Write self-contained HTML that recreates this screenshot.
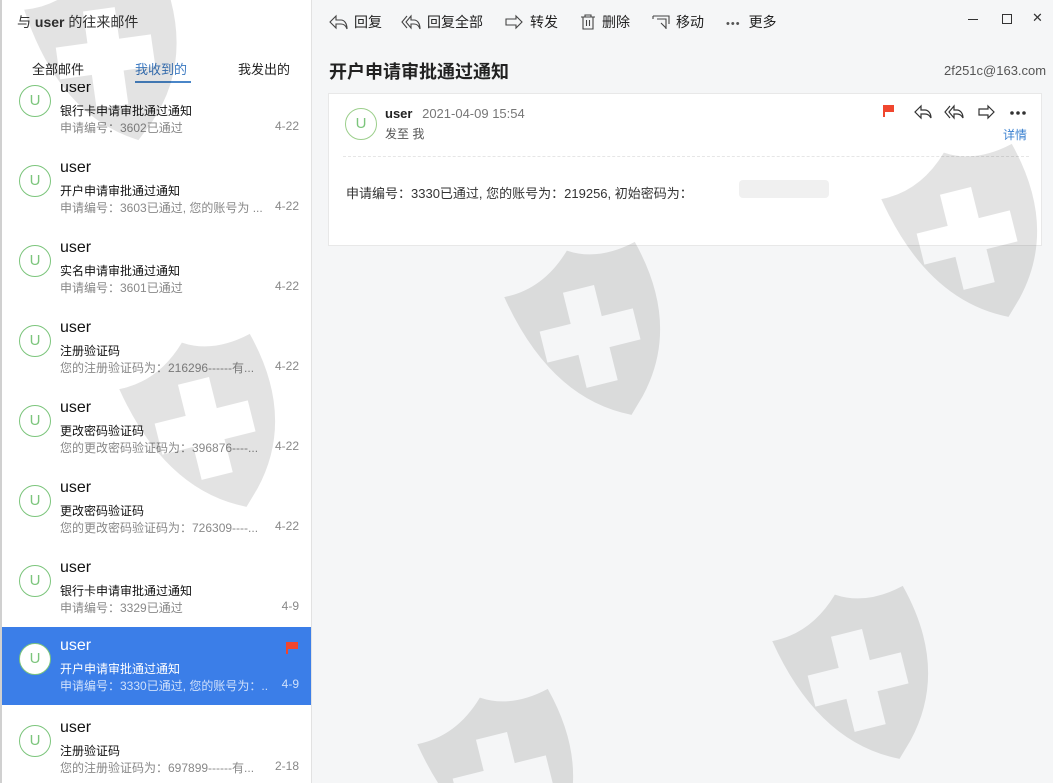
<!DOCTYPE html>
<html><head><meta charset="utf-8"><style>
*{margin:0;padding:0;box-sizing:border-box}
body{width:1053px;height:783px;overflow:hidden;position:relative;background:#f5f6f7;font-family:"Liberation Sans","Noto Sans CJK SC",sans-serif;color:#222}
#left{position:absolute;left:0;top:0;width:312px;height:783px;background:#fff;border-left:2px solid #d0d0d0;border-right:1px solid #e2e2e2;overflow:hidden}
.hdr{position:absolute;left:15px;top:12px;font-size:14px;color:#333}
.tabs{position:absolute;top:59px;left:0;width:310px;font-size:13px;color:#222}
.tabs span{position:absolute}
.list{position:absolute;top:84px;left:0;width:310px;height:699px;overflow:hidden}
.it{position:absolute;left:0;width:310px;height:78px}
.av{position:absolute;left:17px;top:16px;width:32px;height:32px;border:1px solid #7cc57c;border-radius:50%;text-align:center;line-height:30px;color:#7cc57c;font-size:15px;background:#fff}
.u{position:absolute;left:58px;top:10px;font-size:16px;color:#111}
.t{position:absolute;left:58px;top:33px;font-size:12px;color:#111}
.p{position:absolute;left:58px;top:50px;font-size:12px;color:#888;width:207px;white-space:nowrap;overflow:hidden}
.d{position:absolute;right:13px;top:50px;font-size:12px;color:#888}
.sel{background:#3b7ee8}
.sel .u,.sel .t{color:#fff}.sel .p,.sel .d{color:#cfe0fb}
.tb{position:absolute;top:12px;font-size:14px;color:#222}
.tb svg{vertical-align:-3px;margin-right:6px}
</style></head><body>
<div id="left">
<div class="hdr">与 <b>user</b> 的往来邮件</div>
<div class="tabs"><span style="left:30px">全部邮件</span><span style="left:133px;color:#3a78c0">我收到的</span><span style="left:133px;top:22px;width:56px;height:2px;background:#4a86c8"></span><span style="left:236px">我发出的</span></div>
<div class="list">
<div class="it" style="top:-15px"><div class="av">U</div><div class="u">user</div><div class="t">银行卡申请审批通过通知</div><div class="p">申请编号：3602已通过</div><div class="d">4-22</div></div>
<div class="it" style="top:65px"><div class="av">U</div><div class="u">user</div><div class="t">开户申请审批通过通知</div><div class="p">申请编号：3603已通过, 您的账号为 ...</div><div class="d">4-22</div></div>
<div class="it" style="top:145px"><div class="av">U</div><div class="u">user</div><div class="t">实名申请审批通过通知</div><div class="p">申请编号：3601已通过</div><div class="d">4-22</div></div>
<div class="it" style="top:225px"><div class="av">U</div><div class="u">user</div><div class="t">注册验证码</div><div class="p">您的注册验证码为：216296------有...</div><div class="d">4-22</div></div>
<div class="it" style="top:305px"><div class="av">U</div><div class="u">user</div><div class="t">更改密码验证码</div><div class="p">您的更改密码验证码为：396876----...</div><div class="d">4-22</div></div>
<div class="it" style="top:385px"><div class="av">U</div><div class="u">user</div><div class="t">更改密码验证码</div><div class="p">您的更改密码验证码为：726309----...</div><div class="d">4-22</div></div>
<div class="it" style="top:465px"><div class="av">U</div><div class="u">user</div><div class="t">银行卡申请审批通过通知</div><div class="p">申请编号：3329已通过</div><div class="d">4-9</div></div>
<div class="it sel" style="top:543px"><div class="av">U</div><div class="u">user</div><div class="t">开户申请审批通过通知</div><div class="p">申请编号：3330已通过, 您的账号为：...</div><div class="d">4-9</div><svg style="position:absolute;left:283px;top:14px" width="14" height="14"><path d="M2 1v12" stroke="#f0462e" stroke-width="2"/><path d="M3 1h10v7H3z" fill="#f0462e"/></svg></div>
<div class="it" style="top:625px"><div class="av">U</div><div class="u">user</div><div class="t">注册验证码</div><div class="p">您的注册验证码为：697899------有...</div><div class="d">2-18</div></div>
</div>
</div>
<div class="tb" style="left:328px"><svg width="20" height="16" fill="none" stroke="#444" stroke-width="1.1"><path d="M8 2L2 8l6 6V10h5c3 0 5 2 6 5 0-6-3-9-6-9H8z"/></svg>回复</div>
<div class="tb" style="left:401px"><svg width="20" height="16" fill="none" stroke="#444" stroke-width="1.1"><path d="M6 2L1 8l5 6M10 2L5 8l5 6V10h3c3 0 5 2 6 5 0-6-3-9-6-9h-3z"/></svg>回复全部</div>
<div class="tb" style="left:504px"><svg width="20" height="16" fill="none" stroke="#444" stroke-width="1.1"><path d="M12 2l6 6-6 6v-3H2V5h10z"/></svg>转发</div>
<div class="tb" style="left:580px"><svg width="16" height="16" fill="none" stroke="#444" stroke-width="1.1"><path d="M1 3h14M5 3V1h6v2M3 3v12h10V3M6.5 6v6M9.5 6v6"/></svg>删除</div>
<div class="tb" style="left:652px"><svg width="18" height="16" fill="none" stroke="#444" stroke-width="1.1"><path d="M1 2h16v8M1 2v3M5 5h9v10M9 9l5 5"/></svg>移动</div>
<div class="tb" style="left:726px"><span style="letter-spacing:1px;margin-right:8px;color:#555;font-size:11px">•••</span>更多</div>
<div style="position:absolute;left:968px;top:19px;width:10px;height:1px;background:#333"></div>
<div style="position:absolute;left:1002px;top:14px;width:10px;height:10px;border:1px solid #333"></div>
<div style="position:absolute;left:1032px;top:10px;font-size:13px;color:#333">✕</div>
<div style="position:absolute;left:329px;top:58px;font-size:18px;font-weight:bold;color:#222">开户申请审批通过通知</div>
<div style="position:absolute;left:944px;top:63px;font-size:13px;color:#555">2f251c@163.com</div>
<div style="position:absolute;left:328px;top:93px;width:714px;height:153px;background:#fff;border:1px solid #e8e8e8">
<div style="position:absolute;left:16px;top:14px;width:32px;height:32px;border:1px solid #9ccf8c;border-radius:50%;text-align:center;line-height:30px;color:#7cc57c;font-size:15px">U</div>
<div style="position:absolute;left:56px;top:12px;font-size:13px"><b>user</b> <span style="color:#777;margin-left:6px">2021-04-09 15:54</span></div>
<div style="position:absolute;left:56px;top:31px;font-size:12px;color:#555">发至 我</div>
<svg style="position:absolute;left:553px;top:9px" width="150" height="18" fill="none" stroke="#333" stroke-width="1.2"><path d="M2 2v12" stroke="#f0462e" stroke-width="2"/><path d="M3 2h9v7H3z" fill="#f0462e" stroke="none"/><path d="M39 3l-6 6 6 6v-4h4c3 0 5 2 6 4 0-5-3-8-6-8h-4z"/><path d="M68 3l-5 6 5 6M72 3l-5 6 5 6v-4h3c3 0 5 2 6 4 0-5-3-8-6-8h-3z"/><path d="M106 3l6 6-6 6v-3h-9V6h9z"/><circle cx="130" cy="10" r="1.2" fill="#333"/><circle cx="136" cy="10" r="1.2" fill="#333"/><circle cx="142" cy="10" r="1.2" fill="#333"/></svg>
<div style="position:absolute;left:674px;top:32px;font-size:12px;color:#3a80d0">详情</div>
<div style="position:absolute;left:14px;top:62px;width:686px;border-top:1px dashed #e6e6e6"></div>
<div style="position:absolute;left:17px;top:89px;font-size:13px;color:#333">申请编号：3330已通过, 您的账号为：219256, 初始密码为：</div>
<div style="position:absolute;left:410px;top:86px;width:90px;height:18px;background:#f0f0f0;border-radius:4px"></div>
</div>
<svg style="position:absolute;left:0;top:0" width="1053" height="783">
<defs><path id="sh" fill-rule="evenodd" d="M0 30Q40 32 72 0Q100 18 140 8Q165 100 110 160L95 175Q20 140 0 30Z M58 40h32v32h32v32H90v34H58v-34H26V72h32Z"/></defs>
<g fill="rgba(0,0,0,0.11)">
<use href="#sh" transform="translate(20,-20) rotate(-8)"/>
<use href="#sh" transform="translate(112,360) rotate(-14)"/>
<use href="#sh" transform="translate(497,268) rotate(-14)"/>
<use href="#sh" transform="translate(874,170) rotate(-14)"/>
<use href="#sh" transform="translate(765,612) rotate(-14)"/>
<use href="#sh" transform="translate(410,715) rotate(-14)"/>
</g></svg>
</body></html>
